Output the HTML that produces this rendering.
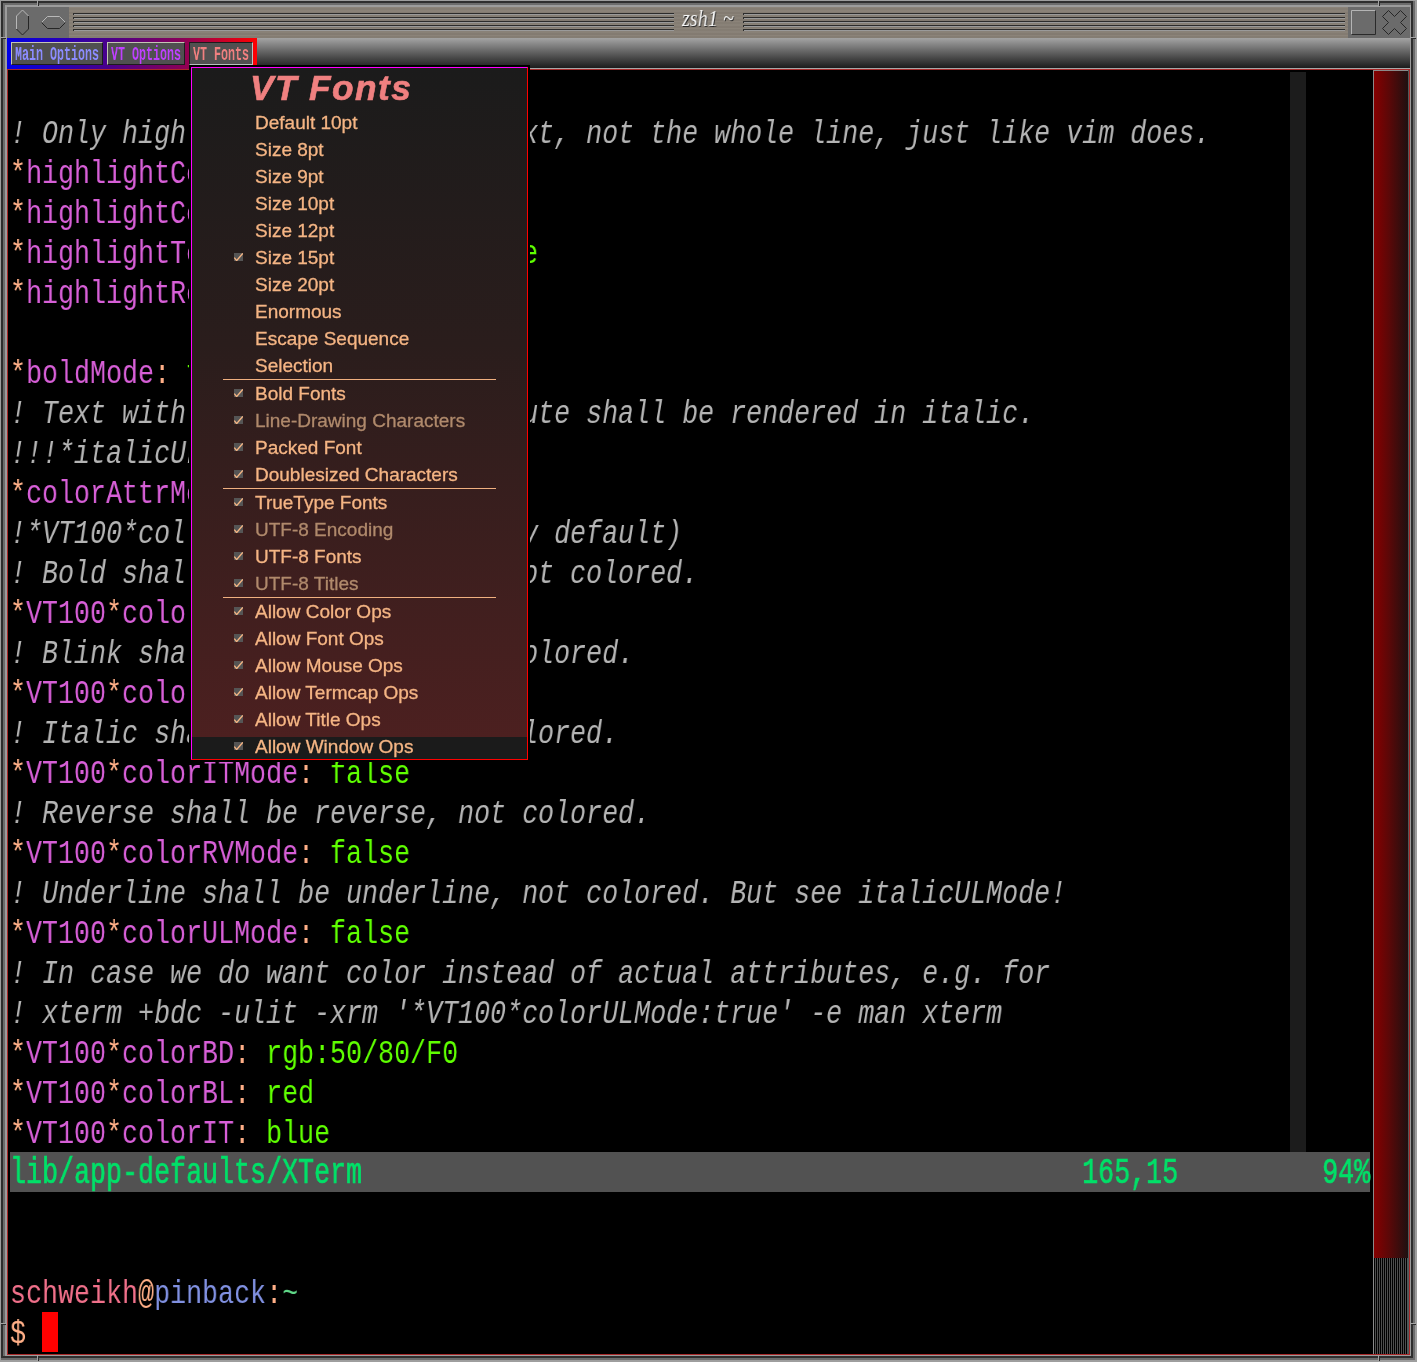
<!DOCTYPE html>
<html><head><meta charset="utf-8">
<style>
html,body{margin:0;padding:0;}
body{width:1417px;height:1362px;position:relative;overflow:hidden;background:#9e9e9e;font-family:"Liberation Sans",sans-serif;}
.a{position:absolute;}
/* title bar */
#tb{left:7px;top:7px;width:1403px;height:31px;background:#877f75;
 background-image:repeating-linear-gradient(180deg,rgba(255,255,255,.03) 0 1px,rgba(0,0,0,.02) 1px 3px,rgba(255,255,255,.02) 3px 5px,rgba(0,0,0,.03) 5px 7px);}
.stripes{top:13px;height:18px;
 background:repeating-linear-gradient(180deg,#2c2c2c 0 1px,#9a9a9a 1px 2px,transparent 2px 4px);}
.stripes:before{content:"";position:absolute;left:0;top:0;width:1px;height:18px;background:repeating-linear-gradient(180deg,#2c2c2c 0 2px,transparent 2px 4px);}
#ticons{left:7px;top:7px;width:62px;height:31px;background:#6b6b6b;}
#tbtn{left:1348px;top:7px;width:62px;height:31px;background:#6b6b6b;}
#title{will-change:transform;left:682px;top:2px;font:italic 24px "Liberation Serif",serif;line-height:32px;color:#f4f4f4;text-shadow:1px 1px 0 #2a2a2a;white-space:pre;transform-origin:0 0;transform:scaleX(.84);}
/* menubar */
#mb{left:7px;top:38px;width:1403px;height:30px;background:linear-gradient(180deg,#a4a4a4 0%,#5e5e5e 50%,#1c1c1c 100%);}
#mbline{left:7px;top:68px;width:1403px;height:1px;background:#a8a8a8;}
#mbframe{left:7px;top:38px;width:250px;height:31px;background:linear-gradient(90deg,#0000e8 0%,#48008c 40%,#8a0058 70%,#ff0000 100%);}
.btn{top:42px;height:21px;background:#505050;border-style:solid;border-width:1px;overflow:hidden;}
.raised{border-color:#c4c4b4 #1c1c1c #1c1c1c #c4c4b4;}
.sunk{border-color:#1c1c1c #b8c0c0 #b8c0c0 #1c1c1c;}
.bt{will-change:transform;position:absolute;left:3px;top:-2px;font:bold 20px "Liberation Mono",monospace;line-height:28px;white-space:pre;transform-origin:0 0;transform:scaleX(.583);}
/* terminal */
#term{left:7px;top:69px;width:1401px;height:1284px;background:#000;border:1px solid #a82828;}
.row{position:absolute;left:10px;height:40px;line-height:40px;font:34px "Liberation Mono",monospace;white-space:pre;transform-origin:0 0;transform:scaleX(.78431);color:#bcbcbc;will-change:transform;}
.c{font-style:italic;color:#b4b4b4;}
.s{color:#ffaf87;}
.n{color:#d75fd7;}
.g{color:#5fff00;}
.p1{color:#f0708a;}
.p2{color:#8090e0;}
.p3{color:#5fd787;}
#cc{left:1290px;top:72px;width:16px;height:1080px;background:#1c1c1c;}
#status{left:10px;top:1152px;width:1360px;height:40px;background:#525252;}
.st{color:#00e068;-webkit-text-stroke:.7px #00e068;}
#cursor{left:42px;top:1312px;width:16px;height:40px;background:#ff0000;}
/* scrollbar */
#sb{left:1373px;top:70px;width:36px;height:1284px;background:#505858;}
#sbs{left:1374px;top:1258px;width:33px;height:96px;background:repeating-linear-gradient(90deg,#000 0 1px,#4e4e4e 1px 2px);}
#sbl{left:1373px;top:70px;width:1px;height:1284px;background:#8a8a8a;}
#sbthumb{left:1373px;top:70px;width:35px;height:1188px;border-left:1px solid #8a8a8a;border-top:1px solid #8a8a8a;box-sizing:border-box;background:linear-gradient(90deg,#860000 0%,#5a0808 45%,#1e1010 100%);}
/* popup */
#pop{left:189px;top:65px;width:341px;height:697px;background:#000;}
#popin{left:191px;top:67px;width:335px;height:691px;border:1px solid;border-color:#ff00ff #ff0000 #ff0000 #ff00ff;background:linear-gradient(180deg,#1b1b1b 0%,#2a1d1c 40%,#4e2020 100%);}
#hl{left:192px;top:737px;width:335px;height:22px;background:#1b1b1b;}
#ptitle{will-change:transform;left:250px;top:67px;font:italic bold 35.3px "Liberation Sans",sans-serif;line-height:42px;letter-spacing:1.4px;color:#f08080;-webkit-text-stroke:.6px #f08080;white-space:pre;}
.mi{will-change:transform;left:255px;font:19px "Liberation Sans",sans-serif;line-height:40px;letter-spacing:0px;color:#f5b584;-webkit-text-stroke:.3px #f5b584;white-space:pre;}
.mi.dis{color:#b08a6c;-webkit-text-stroke:.3px #b08a6c;}
.sep{left:223px;width:273px;height:1px;background:#f0b080;}
.ck{left:234px;}
</style></head>
<body>
<!-- frame -->
<div class="a" style="left:1px;top:1px;width:1414px;height:1359px;background:#6c6c6c"></div>
<div class="a" style="left:1px;top:1px;width:2px;height:1357px;background:#2e2e2e"></div>
<div class="a" style="left:1px;top:1px;width:1412px;height:2px;background:#2e2e2e"></div>
<div class="a" style="left:1411px;top:1px;width:2px;height:1357px;background:#2e2e2e"></div>
<div class="a" style="left:1px;top:1356px;width:1412px;height:2px;background:#2e2e2e"></div>
<div class="a" style="left:5px;top:5px;width:1406px;height:1351px;background:#9c9c9c"></div>
<div class="a" style="left:37px;top:0px;width:1px;height:7px;background:#a4a4a4"></div>
<div class="a" style="left:38px;top:1px;width:1px;height:5px;background:#2a2a2a"></div>
<div class="a" style="left:37px;top:1355px;width:1px;height:7px;background:#a4a4a4"></div>
<div class="a" style="left:38px;top:1356px;width:1px;height:5px;background:#2a2a2a"></div>
<div class="a" style="left:1378px;top:0px;width:1px;height:7px;background:#a4a4a4"></div>
<div class="a" style="left:1379px;top:1px;width:1px;height:5px;background:#2a2a2a"></div>
<div class="a" style="left:1378px;top:1355px;width:1px;height:7px;background:#a4a4a4"></div>
<div class="a" style="left:1379px;top:1356px;width:1px;height:5px;background:#2a2a2a"></div>
<div class="a" style="left:0px;top:37px;width:7px;height:1px;background:#a4a4a4"></div>
<div class="a" style="left:1px;top:38px;width:5px;height:1px;background:#2a2a2a"></div>
<div class="a" style="left:1410px;top:37px;width:7px;height:1px;background:#a4a4a4"></div>
<div class="a" style="left:1411px;top:38px;width:5px;height:1px;background:#2a2a2a"></div>
<div class="a" style="left:0px;top:1323px;width:7px;height:1px;background:#a4a4a4"></div>
<div class="a" style="left:1px;top:1324px;width:5px;height:1px;background:#2a2a2a"></div>
<div class="a" style="left:1410px;top:1323px;width:7px;height:1px;background:#a4a4a4"></div>
<div class="a" style="left:1411px;top:1324px;width:5px;height:1px;background:#2a2a2a"></div>
<!-- title bar -->
<div class="a" id="tb"></div>
<div class="a" id="ticons"></div>
<svg class="a" style="left:7px;top:7px" width="62" height="31" viewBox="0 0 62 31">
 <path d="M9.5 22 L9.5 9 L15.5 3 L21.5 9" stroke="#b8b8b8" stroke-width="1" fill="none"/>
 <path d="M21.5 9 L21.5 22 L15.5 28 L9.5 22" stroke="#262626" stroke-width="1" fill="none"/>
 <path d="M34.5 15.5 L40.5 9.5 L52.5 9.5 L58.5 15.5" stroke="#b8b8b8" stroke-width="1" fill="none"/>
 <path d="M58.5 15.5 L52.5 21.5 L40.5 21.5 L34.5 15.5" stroke="#262626" stroke-width="1" fill="none"/>
</svg>
<div class="a" id="tbtn"></div>
<svg class="a" style="left:1348px;top:7px" width="62" height="31" viewBox="0 0 62 31">
 <path d="M3.5 27.5 L3.5 3.5 L27.5 3.5" stroke="#b4b4b4" stroke-width="1" fill="none"/>
 <path d="M27.5 3.5 L27.5 27.5 L3.5 27.5" stroke="#2a2a2a" stroke-width="1" fill="none"/>
 <path d="M40.5 3.5 L46.5 9.5 L52.5 3.5 L58.5 9.5 L52.5 15.5 L58.5 21.5 L52.5 27.5 L46.5 21.5 L40.5 27.5 L34.5 21.5 L40.5 15.5 L34.5 9.5 Z" stroke="#262626" stroke-width="1" fill="none"/>
</svg>
<div class="a stripes" style="left:73px;width:601px"></div>
<div class="a stripes" style="left:743px;width:602px"></div>
<div class="a" id="title">zsh1 ~</div>
<!-- menubar -->
<div class="a" id="mb"></div>
<div class="a" id="mbline"></div>
<div class="a" id="mbframe"></div>
<div class="a btn raised" style="left:11px;width:90px"><span class="bt" style="color:#8c8cff">Main Options</span></div>
<div class="a btn raised" style="left:107px;width:76px"><span class="bt" style="color:#c040ff">VT Options</span></div>
<div class="a btn sunk" style="left:189px;width:62px"><span class="bt" style="color:#f08080">VT Fonts</span></div>
<!-- terminal -->
<div class="a" id="term"></div>
<div class="a" id="cc"></div>
<div class="a" id="status"></div>
<div class="a" id="cursor"></div>
<div class="row" style="top:115px"><span class="c">! Only highlight the selected text, not the whole line, just like vim does.</span></div>
<div class="row" style="top:155px"><span class="s">*</span><span class="n">highlightColorMode</span><span class="s">:</span><span class="g"> true</span></div>
<div class="row" style="top:195px"><span class="s">*</span><span class="n">highlightColor</span><span class="s">:</span><span class="g"> cyan</span></div>
<div class="row" style="top:235px"><span class="s">*</span><span class="n">highlightTextAsPointer</span><span class="s">:</span><span class="g">    false</span></div>
<div class="row" style="top:275px"><span class="s">*</span><span class="n">highlightReverse</span><span class="s">:</span><span class="g"> true</span></div>
<div class="row" style="top:355px"><span class="s">*</span><span class="n">boldMode</span><span class="s">:</span><span class="g"> false</span></div>
<div class="row" style="top:395px"><span class="c">! Text with the underline attribute shall be rendered in italic.</span></div>
<div class="row" style="top:435px"><span class="c">!!!*italicULMode: true</span></div>
<div class="row" style="top:475px"><span class="s">*</span><span class="n">colorAttrMode</span><span class="s">:</span><span class="g"> false</span></div>
<div class="row" style="top:515px"><span class="c">!*VT100*col   orMode: true (on by default)</span></div>
<div class="row" style="top:555px"><span class="c">! Bold shal be bold or bright, not colored.</span></div>
<div class="row" style="top:595px"><span class="s">*</span><span class="n">VT100</span><span class="s">*</span><span class="n">colorBDMode</span><span class="s">:</span><span class="g"> false</span></div>
<div class="row" style="top:635px"><span class="c">! Blink shall be blinking, not colored.</span></div>
<div class="row" style="top:675px"><span class="s">*</span><span class="n">VT100</span><span class="s">*</span><span class="n">colorBLMode</span><span class="s">:</span><span class="g"> false</span></div>
<div class="row" style="top:715px"><span class="c">! Italic shall be italic, not colored.</span></div>
<div class="row" style="top:755px"><span class="s">*</span><span class="n">VT100</span><span class="s">*</span><span class="n">colorITMode</span><span class="s">:</span><span class="g"> false</span></div>
<div class="row" style="top:795px"><span class="c">! Reverse shall be reverse, not colored.</span></div>
<div class="row" style="top:835px"><span class="s">*</span><span class="n">VT100</span><span class="s">*</span><span class="n">colorRVMode</span><span class="s">:</span><span class="g"> false</span></div>
<div class="row" style="top:875px"><span class="c">! Underline shall be underline, not colored. But see italicULMode!</span></div>
<div class="row" style="top:915px"><span class="s">*</span><span class="n">VT100</span><span class="s">*</span><span class="n">colorULMode</span><span class="s">:</span><span class="g"> false</span></div>
<div class="row" style="top:955px"><span class="c">! In case we do want color instead of actual attributes, e.g. for</span></div>
<div class="row" style="top:995px"><span class="c">! xterm +bdc -ulit -xrm &#x27;*VT100*colorULMode:true&#x27; -e man xterm</span></div>
<div class="row" style="top:1035px"><span class="s">*</span><span class="n">VT100</span><span class="s">*</span><span class="n">colorBD</span><span class="s">:</span><span class="g"> rgb:50/80/F0</span></div>
<div class="row" style="top:1075px"><span class="s">*</span><span class="n">VT100</span><span class="s">*</span><span class="n">colorBL</span><span class="s">:</span><span class="g"> red</span></div>
<div class="row" style="top:1115px"><span class="s">*</span><span class="n">VT100</span><span class="s">*</span><span class="n">colorIT</span><span class="s">:</span><span class="g"> blue</span></div>
<div class="row" style="top:1275px"><span class="p1">schweikh</span><span class="s">@</span><span class="p2">pinback</span><span class="s">:</span><span class="p3">~</span></div>
<div class="row" style="top:1315px"><span class="s">$ </span></div>
<div class="row" style="top:1153px;font-size:36px;transform:scaleX(.7407)"><span class="st">lib/app-defaults/XTerm                                             165,15         94%</span></div>
<div class="a" id="sb"></div>
<div class="a" id="sbthumb"></div>
<div class="a" id="sbs"></div>
<div class="a" id="sbl"></div>
<!-- popup -->
<div class="a" id="pop"></div>
<div class="a" id="popin"></div>
<div class="a" id="hl"></div>
<div class="a" id="ptitle">VT Fonts</div>
<div class="a mi" style="top:103px">Default 10pt</div>
<div class="a mi" style="top:130px">Size 8pt</div>
<div class="a mi" style="top:157px">Size 9pt</div>
<div class="a mi" style="top:184px">Size 10pt</div>
<div class="a mi" style="top:211px">Size 12pt</div>
<div class="a mi" style="top:238px">Size 15pt</div>
<svg class="a ck" style="top:253px" width="9" height="8" viewBox="0 0 9 8"><rect width="9" height="8" fill="#555"/><path d="M0.3 4.6 L2.6 7.6 L8.8 0.4" stroke="#f5b584" stroke-width="1.4" fill="none"/></svg>
<div class="a mi" style="top:265px">Size 20pt</div>
<div class="a mi" style="top:292px">Enormous</div>
<div class="a mi" style="top:319px">Escape Sequence</div>
<div class="a mi" style="top:346px">Selection</div>
<div class="a sep" style="top:379px"></div>
<div class="a mi" style="top:374px">Bold Fonts</div>
<svg class="a ck" style="top:389px" width="9" height="8" viewBox="0 0 9 8"><rect width="9" height="8" fill="#555"/><path d="M0.3 4.6 L2.6 7.6 L8.8 0.4" stroke="#f5b584" stroke-width="1.4" fill="none"/></svg>
<div class="a mi dis" style="top:401px">Line-Drawing Characters</div>
<svg class="a ck" style="top:416px" width="9" height="8" viewBox="0 0 9 8"><rect width="9" height="8" fill="#555"/><path d="M0.3 4.6 L2.6 7.6 L8.8 0.4" stroke="#f5b584" stroke-width="1.4" fill="none"/></svg>
<div class="a mi" style="top:428px">Packed Font</div>
<svg class="a ck" style="top:443px" width="9" height="8" viewBox="0 0 9 8"><rect width="9" height="8" fill="#555"/><path d="M0.3 4.6 L2.6 7.6 L8.8 0.4" stroke="#f5b584" stroke-width="1.4" fill="none"/></svg>
<div class="a mi" style="top:455px">Doublesized Characters</div>
<svg class="a ck" style="top:470px" width="9" height="8" viewBox="0 0 9 8"><rect width="9" height="8" fill="#555"/><path d="M0.3 4.6 L2.6 7.6 L8.8 0.4" stroke="#f5b584" stroke-width="1.4" fill="none"/></svg>
<div class="a sep" style="top:488px"></div>
<div class="a mi" style="top:483px">TrueType Fonts</div>
<svg class="a ck" style="top:498px" width="9" height="8" viewBox="0 0 9 8"><rect width="9" height="8" fill="#555"/><path d="M0.3 4.6 L2.6 7.6 L8.8 0.4" stroke="#f5b584" stroke-width="1.4" fill="none"/></svg>
<div class="a mi dis" style="top:510px">UTF-8 Encoding</div>
<svg class="a ck" style="top:525px" width="9" height="8" viewBox="0 0 9 8"><rect width="9" height="8" fill="#555"/><path d="M0.3 4.6 L2.6 7.6 L8.8 0.4" stroke="#f5b584" stroke-width="1.4" fill="none"/></svg>
<div class="a mi" style="top:537px">UTF-8 Fonts</div>
<svg class="a ck" style="top:552px" width="9" height="8" viewBox="0 0 9 8"><rect width="9" height="8" fill="#555"/><path d="M0.3 4.6 L2.6 7.6 L8.8 0.4" stroke="#f5b584" stroke-width="1.4" fill="none"/></svg>
<div class="a mi dis" style="top:564px">UTF-8 Titles</div>
<svg class="a ck" style="top:579px" width="9" height="8" viewBox="0 0 9 8"><rect width="9" height="8" fill="#555"/><path d="M0.3 4.6 L2.6 7.6 L8.8 0.4" stroke="#f5b584" stroke-width="1.4" fill="none"/></svg>
<div class="a sep" style="top:597px"></div>
<div class="a mi" style="top:592px">Allow Color Ops</div>
<svg class="a ck" style="top:607px" width="9" height="8" viewBox="0 0 9 8"><rect width="9" height="8" fill="#555"/><path d="M0.3 4.6 L2.6 7.6 L8.8 0.4" stroke="#f5b584" stroke-width="1.4" fill="none"/></svg>
<div class="a mi" style="top:619px">Allow Font Ops</div>
<svg class="a ck" style="top:634px" width="9" height="8" viewBox="0 0 9 8"><rect width="9" height="8" fill="#555"/><path d="M0.3 4.6 L2.6 7.6 L8.8 0.4" stroke="#f5b584" stroke-width="1.4" fill="none"/></svg>
<div class="a mi" style="top:646px">Allow Mouse Ops</div>
<svg class="a ck" style="top:661px" width="9" height="8" viewBox="0 0 9 8"><rect width="9" height="8" fill="#555"/><path d="M0.3 4.6 L2.6 7.6 L8.8 0.4" stroke="#f5b584" stroke-width="1.4" fill="none"/></svg>
<div class="a mi" style="top:673px">Allow Termcap Ops</div>
<svg class="a ck" style="top:688px" width="9" height="8" viewBox="0 0 9 8"><rect width="9" height="8" fill="#555"/><path d="M0.3 4.6 L2.6 7.6 L8.8 0.4" stroke="#f5b584" stroke-width="1.4" fill="none"/></svg>
<div class="a mi" style="top:700px">Allow Title Ops</div>
<svg class="a ck" style="top:715px" width="9" height="8" viewBox="0 0 9 8"><rect width="9" height="8" fill="#555"/><path d="M0.3 4.6 L2.6 7.6 L8.8 0.4" stroke="#f5b584" stroke-width="1.4" fill="none"/></svg>
<div class="a mi" style="top:727px">Allow Window Ops</div>
<svg class="a ck" style="top:742px" width="9" height="8" viewBox="0 0 9 8"><rect width="9" height="8" fill="#555"/><path d="M0.3 4.6 L2.6 7.6 L8.8 0.4" stroke="#f5b584" stroke-width="1.4" fill="none"/></svg>
</body></html>
